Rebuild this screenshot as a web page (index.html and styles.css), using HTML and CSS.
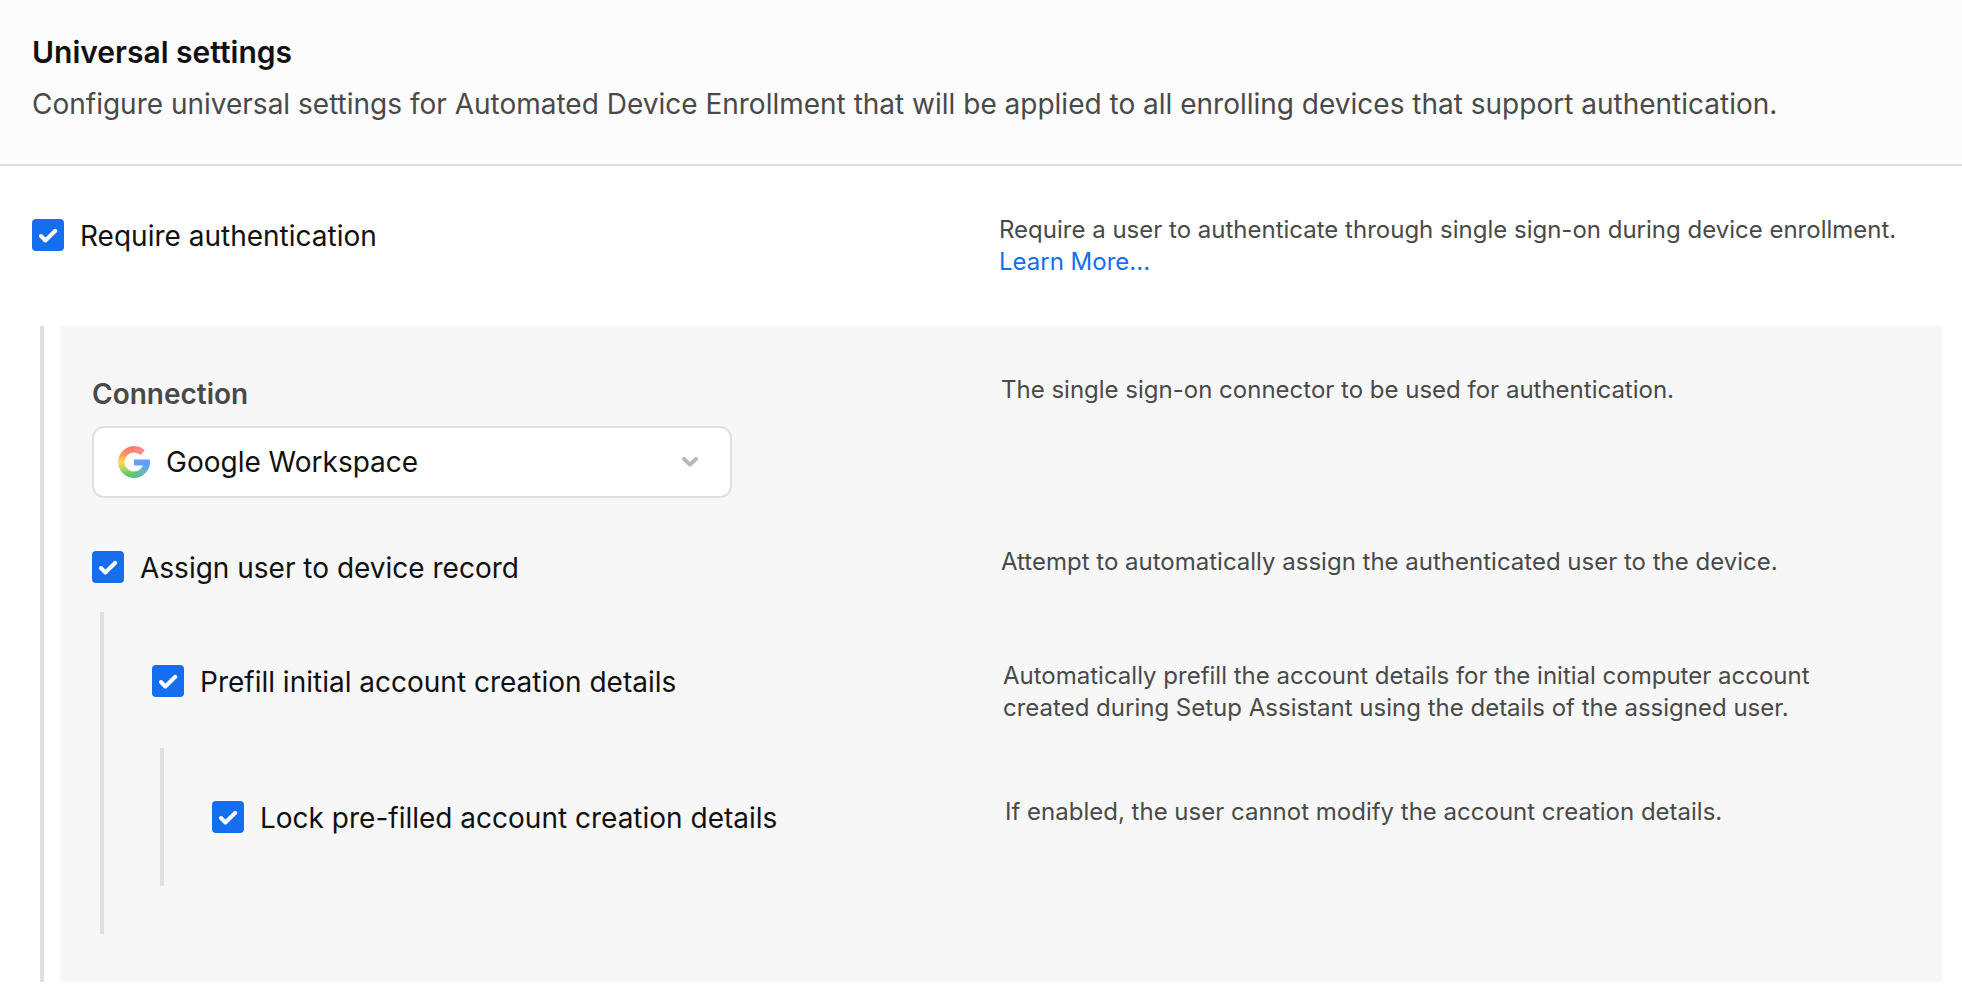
FILE: index.html
```
<!DOCTYPE html>
<html lang="en">
<head>
<meta charset="UTF-8">
<meta name="viewport" content="width=device-width, initial-scale=1">
<title>Universal settings</title>
<link rel="stylesheet" href="styles.css">
</head>
<body>
  <header class="page-header">
    <h1>Universal settings</h1>
    <p>Configure universal settings for Automated Device Enrollment that will be applied to all enrolling devices that support authentication.</p>
  </header>

  <main class="settings">
    <div class="row">
      <label class="check">
        <span class="box">
          <input type="checkbox" checked>
          <svg viewBox="0 0 32 32"><path d="M9 17l4.400 4.500L23.300 11.800"/></svg>
        </span>
        Require authentication
      </label>
      <p class="help">Require a user to authenticate through single sign-on during device enrollment. <a href="#">Learn More...</a></p>
    </div>

    <div class="group">
      <div class="panel">
        <div class="row">
          <div class="field">
            <label for="connection">Connection</label>
            <div class="select">
              <svg class="logo" viewBox="0 0 32 32" fill="none" stroke-width="6.400">
                <defs>
                  <linearGradient id="g-left" gradientUnits="userSpaceOnUse" x1="0" y1="0" x2="0" y2="32">
                    <stop offset="0.1" stop-color="#ff7b70"/>
                    <stop offset="0.28" stop-color="#ff9a5c"/>
                    <stop offset="0.5" stop-color="#ffd95f"/>
                    <stop offset="0.7" stop-color="#b9d45f"/>
                    <stop offset="0.9" stop-color="#58c672"/>
                  </linearGradient>
                  <linearGradient id="g-right" gradientUnits="userSpaceOnUse" x1="16" y1="30" x2="29" y2="18">
                    <stop offset="0" stop-color="#4fc47a"/>
                    <stop offset="0.5" stop-color="#6db9bd"/>
                    <stop offset="1" stop-color="#629dff"/>
                  </linearGradient>
                </defs>
                <path stroke="url(#g-left)" d="M16.200 3.200a12.800 12.800 0 0 0 0 25.600"/>
                <path stroke="#ff8689" d="M16 3.200a12.800 12.800 0 0 1 8.700 3.400"/>
                <path stroke="url(#g-right)" d="M28.700 17A12.800 12.800 0 0 1 16 28.800"/>
                <path fill="#629dff" d="M16 13.500h15.700a16 16 0 0 1 0 6H16z"/>
              </svg>
              <select id="connection">
                <option>Google Workspace</option>
              </select>
              <svg class="chevron" viewBox="0 0 16 10"><path d="M2 2l6 5.600L14 2"/></svg>
            </div>
          </div>
          <p class="help">The single sign-on connector to be used for authentication.</p>
        </div>

        <div class="row">
          <label class="check">
            <span class="box">
              <input type="checkbox" checked>
              <svg viewBox="0 0 32 32"><path d="M9 17l4.400 4.500L23.300 11.800"/></svg>
            </span>
            Assign user to device record
          </label>
          <p class="help">Attempt to automatically assign the authenticated user to the device.</p>
        </div>

        <div class="nested">
          <div class="row">
            <label class="check">
              <span class="box">
                <input type="checkbox" checked>
                <svg viewBox="0 0 32 32"><path d="M9 17l4.400 4.500L23.300 11.800"/></svg>
              </span>
              Prefill initial account creation details
            </label>
            <p class="help">Automatically prefill the account details for the initial computer account created during Setup Assistant using the details of the assigned user.</p>
          </div>

          <div class="nested">
            <div class="row">
              <label class="check">
                <span class="box">
                  <input type="checkbox" checked>
                  <svg viewBox="0 0 32 32"><path d="M9 17l4.400 4.500L23.300 11.800"/></svg>
                </span>
                Lock pre-filled account creation details
              </label>
              <p class="help">If enabled, the user cannot modify the account creation details.</p>
            </div>
          </div>
        </div>
      </div>
    </div>
  </main>
</body>
</html>
```
FILE: styles.css
```
* {
  box-sizing: border-box;
}

body {
  margin: 0;
  background: #fff;
  color: #111;
  font-family: Inter, "Liberation Sans", sans-serif;
  font-size: 28px;
  line-height: 34px;
}

h1,
p {
  margin: 0;
}

a {
  color: #146eee;
  text-decoration: none;
}

.page-header {
  padding: 32px 32px 40px;
  background: #fcfcfc;
  border-bottom: 2px solid #e0e0e0;
}

.page-header h1 {
  font-size: 30px;
  font-weight: 600;
  line-height: 40px;
}

.page-header p {
  margin-top: 12px;
  color: #494949;
  line-height: 40px;
}

.settings {
  padding: 48px 0 24px;
}

.settings > .row {
  padding-left: 32px;
}

.row {
  display: grid;
  grid-template-columns: 1fr 1fr;
  column-gap: 4px;
  align-items: start;
}

.help {
  color: #494949;
  font-size: 24px;
  line-height: 32px;
}

/* checkboxes */
.check {
  display: flex;
  gap: 16px;
  padding: 5px 0 3px;
}

.box {
  position: relative;
  flex: none;
  width: 32px;
  height: 32px;
}

.box input {
  display: block;
  width: 32px;
  height: 32px;
  margin: 0;
  appearance: none;
  border: 2px solid #c4c4c4;
  border-radius: 4px;
  background: #fff;
}

.box input:checked {
  border-color: #146eee;
  background: #146eee;
}

.box svg {
  position: absolute;
  top: 0;
  left: 0;
  fill: none;
  stroke: #fff;
  stroke-width: 4;
  stroke-linecap: round;
  stroke-linejoin: round;
  pointer-events: none;
}

/* indented groups */
.group {
  margin: 48px 20px 0 40px;
  padding-left: 16px;
  border-left: 4px solid #e0e0e0;
}

.panel {
  padding: 48px 36px 48px 32px;
  background: #f7f7f7;
}

.panel > .row + .row {
  margin-top: 48px;
}

.nested {
  margin: 24px 0 0 8px;
  padding: 48px 56px 48px 48px;
  border-left: 4px solid #e0e0e0;
}

/* connection picker */
.field > label {
  display: block;
  color: #494949;
  font-weight: 600;
  line-height: 40px;
}

.select {
  position: relative;
  max-width: 640px;
  margin-top: 12px;
}

.select select {
  display: block;
  width: 100%;
  height: 72px;
  padding: 0 64px 0 72px;
  appearance: none;
  border: 2px solid #e0e0e0;
  border-radius: 12px;
  background: #fff;
  color: #111;
  font: inherit;
}

.select svg {
  position: absolute;
  pointer-events: none;
}

.logo {
  top: 20px;
  left: 26px;
  width: 32px;
  height: 32px;
}

.chevron {
  top: 31px;
  right: 34px;
  width: 16px;
  height: 10px;
  fill: none;
  stroke: #b8b8b8;
  stroke-width: 4;
  stroke-linecap: round;
  stroke-linejoin: round;
}
```
